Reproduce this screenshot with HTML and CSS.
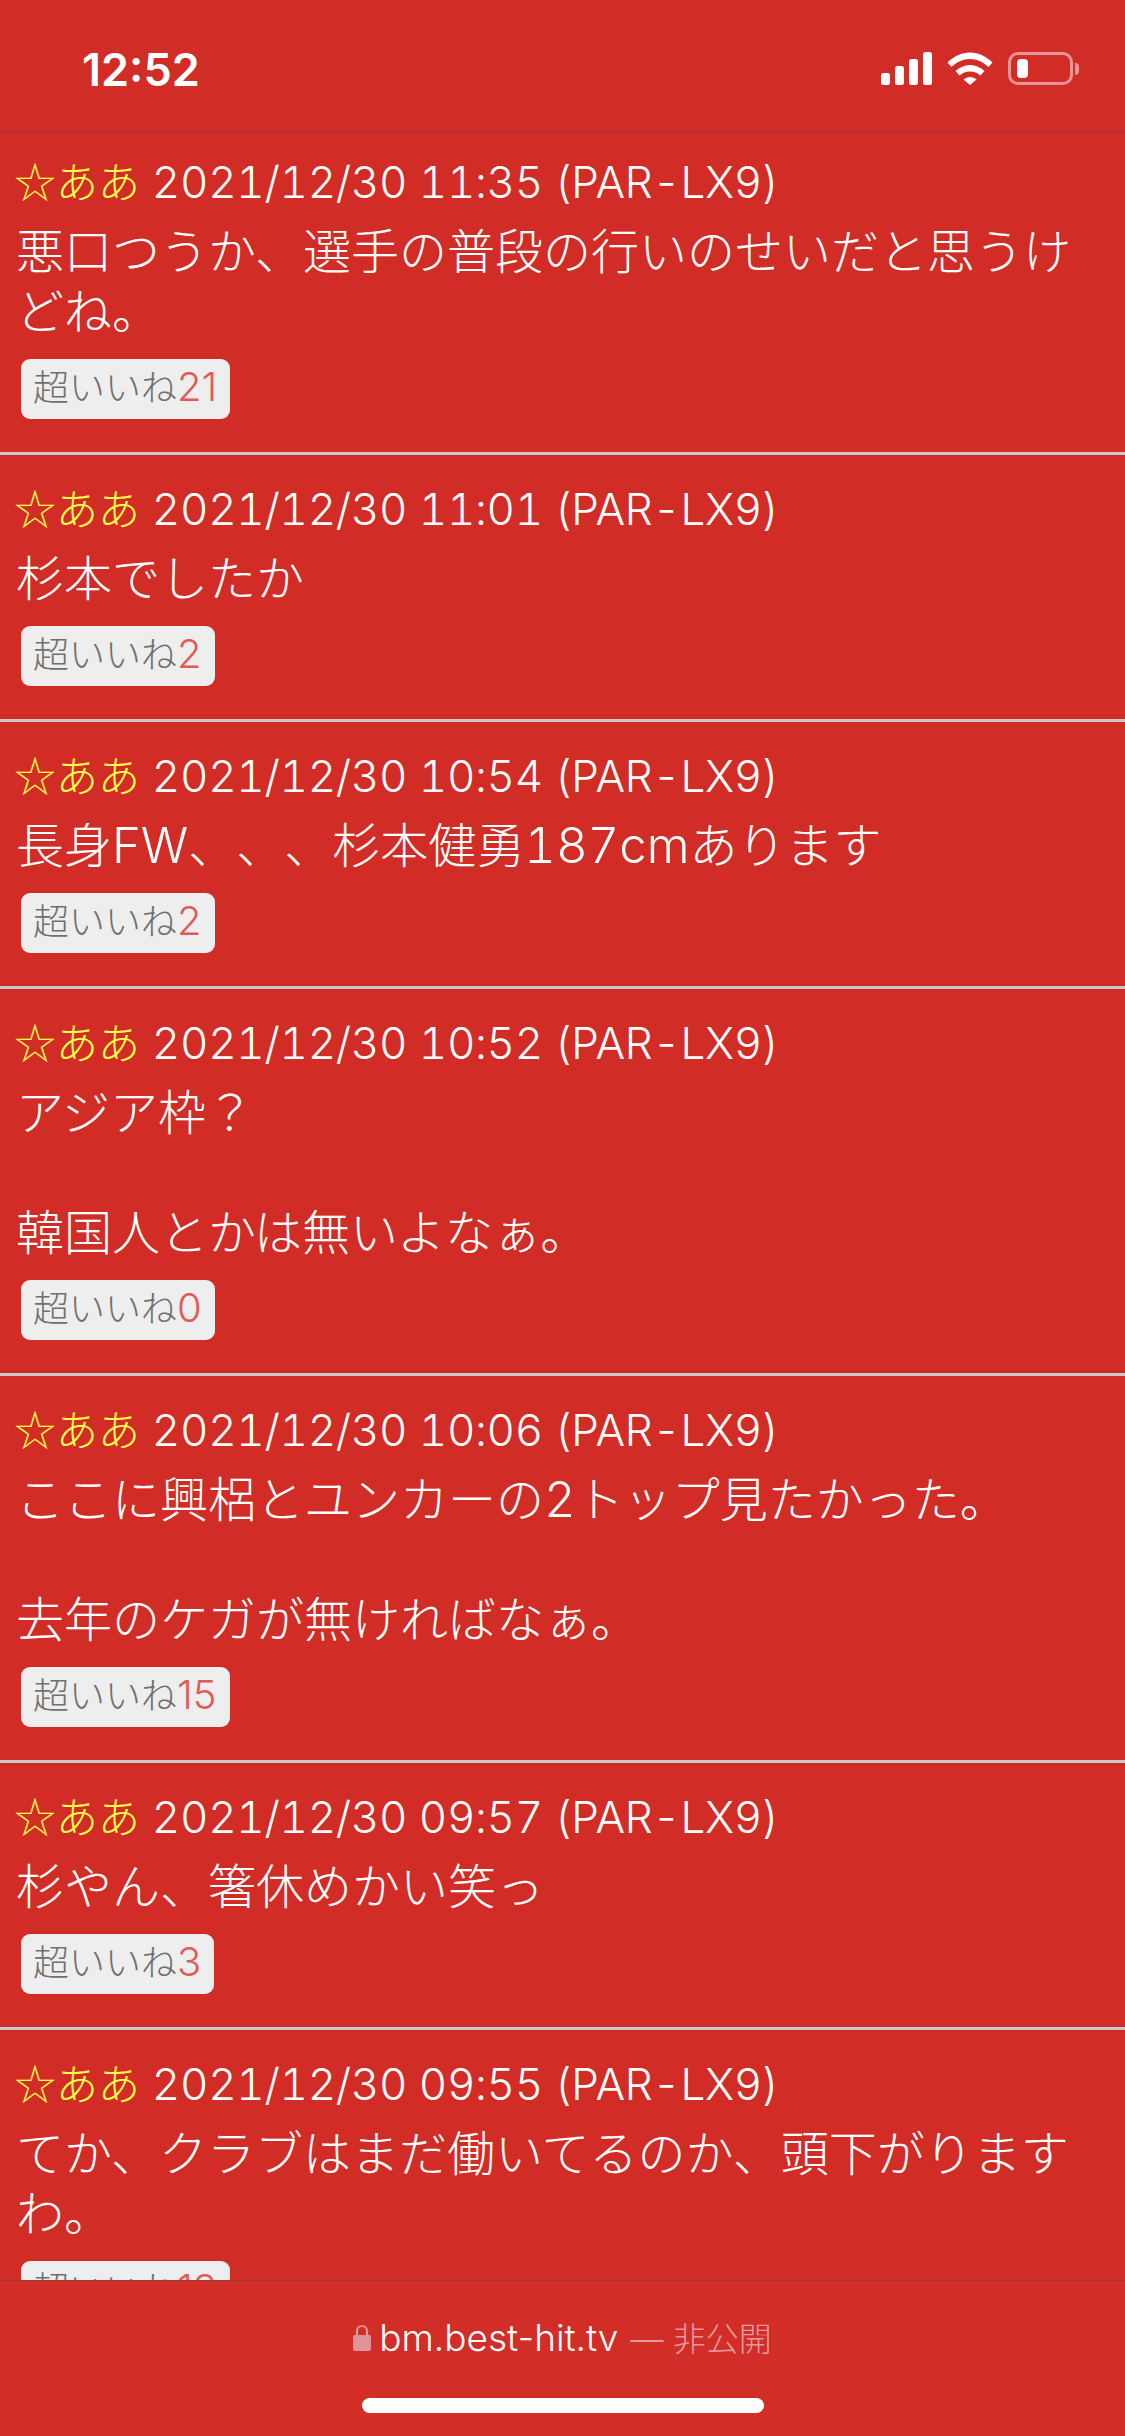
FILE: index.html
```html
<!DOCTYPE html>
<html lang="ja">
<head>
  <meta charset="UTF-8" />
  <meta name="viewport" content="width=device-width, initial-scale=1.0"/>
  <title>bm.best-hit.tv</title>
  <link rel="stylesheet" href="styles.css">
</head>

<body>
  <div class="status-bar">
    <span class="time">12:52</span>
    <div class="status-icons">
      <svg class="signal" viewBox="0 0 51 33" width="51" height="33">
        <rect x="0" y="21" width="9" height="12" rx="2.5"/>
        <rect x="14" y="14" width="9" height="19" rx="2.5"/>
        <rect x="28" y="7" width="9" height="26" rx="2.5"/>
        <rect x="42" y="0" width="9" height="33" rx="2.5"/>
      </svg>
      <svg class="wifi" viewBox="0 0 46 33" width="46" height="33">
        <path d="M0.5 10.5C6.5 4.5 14.5 0.5 23 0.5S39.5 4.5 45.5 10.5L41.5 15C36.5 10 30 7 23 7S9.5 10 4.5 15Z"/>
        <path d="M8.5 19C12.5 15.5 17.5 13 23 13S33.5 15.5 37.5 19L33.5 23.5C30.5 21 27 19.5 23 19.5S15.5 21 12.5 23.5Z"/>
        <path d="M16.5 27.5C18.5 26 20.5 25 23 25S27.5 26 29.5 27.5L23 33Z"/>
      </svg>
      <div class="battery">
        <div class="battery-body"><div class="battery-level"></div></div>
        <div class="battery-cap"></div>
      </div>
    </div>
  </div>

  <div class="list">
    <div class="post first">
      <div class="post-head"><span class="name">☆ああ</span> <span class="meta">2021/12/30 11:35 (PAR-LX9)</span></div>
      <div class="post-body">悪口つうか、選手の普段の行いのせいだと思うけどね。</div>
      <span class="like">超いいね<span class="count">21</span></span>
    </div>
    <div class="post">
      <div class="post-head"><span class="name">☆ああ</span> <span class="meta">2021/12/30 11:01 (PAR-LX9)</span></div>
      <div class="post-body">杉本でしたか</div>
      <span class="like">超いいね<span class="count">2</span></span>
    </div>
    <div class="post">
      <div class="post-head"><span class="name">☆ああ</span> <span class="meta">2021/12/30 10:54 (PAR-LX9)</span></div>
      <div class="post-body">長身<span class="lat">FW</span>、、、杉本健勇<span class="lat">187cm</span>あります</div>
      <span class="like">超いいね<span class="count">2</span></span>
    </div>
    <div class="post">
      <div class="post-head"><span class="name">☆ああ</span> <span class="meta">2021/12/30 10:52 (PAR-LX9)</span></div>
      <div class="post-body">アジア枠？<br><br>韓国人とかは無いよなぁ。</div>
      <span class="like">超いいね<span class="count">0</span></span>
    </div>
    <div class="post">
      <div class="post-head"><span class="name">☆ああ</span> <span class="meta">2021/12/30 10:06 (PAR-LX9)</span></div>
      <div class="post-body">ここに興梠とユンカーの<span class="lat">2</span>トップ見たかった。<br><br>去年のケガが無ければなぁ。</div>
      <span class="like">超いいね<span class="count">15</span></span>
    </div>
    <div class="post">
      <div class="post-head"><span class="name">☆ああ</span> <span class="meta">2021/12/30 09:57 (PAR-LX9)</span></div>
      <div class="post-body">杉やん、箸休めかい笑っ</div>
      <span class="like">超いいね<span class="count">3</span></span>
    </div>
    <div class="post">
      <div class="post-head"><span class="name">☆ああ</span> <span class="meta">2021/12/30 09:55 (PAR-LX9)</span></div>
      <div class="post-body">てか、クラブはまだ働いてるのか、頭下がりますわ。</div>
      <span class="like">超いいね<span class="count">13</span></span>
    </div>
  </div>

  <div class="url-bar">
    <div class="url">
      <svg class="lock" viewBox="0 0 18 27" width="18" height="27">
        <path d="M4 12V7a5 5 0 0 1 10 0v5" fill="none" stroke="#e0939b" stroke-width="2.2"/>
        <rect x="0" y="11" width="18" height="16" rx="2" fill="#e0939b"/>
      </svg>
      <span class="host">bm.best-hit.tv</span>
      <span class="private">— 非公開</span>
    </div>
    <div class="home-indicator"></div>
  </div>
</body>
</html>
```

FILE: styles.css
```css
* {
  margin: 0;
  padding: 0;
  box-sizing: border-box;
}

html, body {
  height: 2436px;
  overflow: hidden;
}

body {
  display: flex;
  flex-direction: column;
  background: #d12d26;
  color: #ffffff;
  font-family: Inter, "Noto Sans CJK JP", sans-serif;
  text-spacing-trim: space-all;
}

.status-bar {
  height: 132px;
  flex-shrink: 0;
  display: flex;
  justify-content: space-between;
  padding: 52px 43px 0 82px;
  border-bottom: 1px solid #8f3a3a;
}

.time {
  font-size: 45px;
  font-weight: 600;
  line-height: 36px;
}

.status-icons {
  display: flex;
  align-items: flex-start;
  gap: 15px;
}

.status-icons svg {
  fill: #ffffff;
  display: block;
}

.battery {
  display: flex;
  align-items: center;
  gap: 2px;
  margin-right: 3px;
}

.battery-body {
  width: 65px;
  height: 33px;
  border: 3px solid #e8969a;
  border-radius: 10px;
  padding: 4px 6px;
}

.battery-level {
  width: 11px;
  height: 100%;
  background: #ffffff;
  border-radius: 4px;
}

.battery-cap {
  width: 4px;
  height: 12px;
  background: #e8969a;
  border-radius: 0 6px 6px 0;
}

.list {
  flex: 1;
  overflow: hidden;
}

.post {
  padding: 24px 16px 33px;
  border-bottom: 3px solid #c9c9c9;
}

.post.first {
  padding-top: 20px;
}

.post-head {
  font-size: 42px;
  line-height: 62px;
  font-weight: 300;
  white-space: nowrap;
}

.name {
  color: #ffff4d;
  font-family: "Noto Sans CJK JP", sans-serif;
  margin-left: -2px;
  line-height: 0;
}

.meta {
  font-size: 44px;
  letter-spacing: -0.3px;
  font-variant-numeric: tabular-nums;
  line-height: 0;
}

.post-body {
  margin-top: 8px;
  font-size: 48px;
  line-height: 60px;
  font-weight: 300;
}

.lat {
  font-size: 49px;
  font-variant-numeric: tabular-nums;
  line-height: 0;
}

.like {
  display: inline-block;
  margin-top: 17px;
  margin-left: 5px;
  height: 60px;
  padding: 0 13px 0 12px;
  background: #eeeeee;
  border-radius: 9px;
  color: #707070;
  font-size: 36px;
  line-height: 58px;
  font-weight: 300;
  vertical-align: top;
}

.count {
  color: #e05a5a;
  font-size: 40px;
  line-height: 0;
}

.url-bar {
  height: 156px;
  flex-shrink: 0;
  background: #d22d27;
  border-top: 1px solid #8f3a3a;
  display: flex;
  flex-direction: column;
  align-items: center;
  padding-top: 34px;
}

.url {
  display: flex;
  align-items: center;
  height: 44px;
  font-size: 33px;
  font-weight: 300;
}

.lock {
  display: block;
  margin-right: 8px;
}

.host {
  color: #ffffff;
  font-size: 37px;
}

.private {
  margin-left: 12px;
  color: #e39aa0;
}

.home-indicator {
  width: 402px;
  height: 15px;
  margin-top: 39px;
  background: #ffffff;
  border-radius: 8px;
}
```
